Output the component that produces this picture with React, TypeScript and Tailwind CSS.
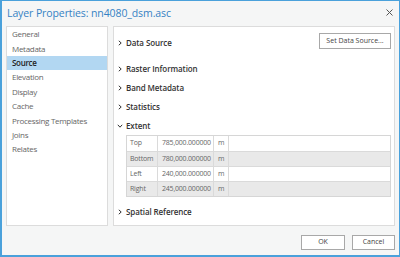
import React from 'react';

const pages = [
  'General',
  'Metadata',
  'Source',
  'Elevation',
  'Display',
  'Cache',
  'Processing Templates',
  'Joins',
  'Relates',
];

const extent = [
  { label: 'Top', value: '785,000.000000' },
  { label: 'Bottom', value: '780,000.000000' },
  { label: 'Left', value: '240,000.000000' },
  { label: 'Right', value: '245,000.000000' },
];

function Chevron({ open }: { open?: boolean }) {
  return (
    <svg width="6" height="6" viewBox="0 0 6 6" className="shrink-0">
      {open ? (
        <path d="M0.8 1.8 L3 4.2 L5.2 1.8" fill="none" stroke="#333" strokeWidth="1" />
      ) : (
        <path d="M1.8 0.8 L4.2 3 L1.8 5.2" fill="none" stroke="#333" strokeWidth="1" />
      )}
    </svg>
  );
}

function SectionHeader({ title, open, className = '' }: { title: string; open?: boolean; className?: string }) {
  return (
    <div className={`flex items-center gap-[3px] h-[19px] pl-[2px] ${className}`}>
      <Chevron open={open} />
      <span className="text-[8px] font-semibold text-[#333] tracking-[-0.1px]">{title}</span>
    </div>
  );
}

export default function App() {
  return (
    <div
      className="w-[400px] h-[257px] bg-[#f5f6f6] border-l-2 border-t border-b-2 border-r border-[#4aa1db] flex flex-col overflow-hidden"
      style={{ fontFamily: '"Open Sans", "Noto Sans", sans-serif' }}
    >
      {/* title bar */}
      <div className="h-[25px] flex items-center justify-between pl-[5px] pr-[6px]">
        <span className="text-[10.5px] text-[#3582c4] tracking-[-0.1px]">Layer Properties: nn4080_dsm.asc</span>
        <svg width="7" height="7" viewBox="0 0 7 7" className="mt-[-2px]">
          <path d="M0.5 0.5 L6.5 6.5 M6.5 0.5 L0.5 6.5" stroke="#555" strokeWidth="1" />
        </svg>
      </div>

      <div className="flex gap-[5px] pl-[4px] pr-[4px] h-[200px]">
        {/* page list */}
        <div className="w-[102px] bg-white border border-[#dcdcdc] flex flex-col">
          {pages.map((p) => (
            <div
              key={p}
              className={`h-[14.4px] flex items-center pl-[5px] text-[8px] tracking-[-0.3px] ${
                p === 'Source' ? 'bg-[#b2d7f2] font-semibold text-[#222]' : 'text-[#666]'
              }`}
            >
              {p}
            </div>
          ))}
        </div>

        {/* source pane */}
        <div className="flex-1 bg-white border border-[#dcdcdc] flex flex-col pt-[6px] pl-[1px] pr-[3px]">
          <div className="flex items-center justify-between h-[16px]">
            <SectionHeader title="Data Source" className="mt-[4px]" />
            <button className="h-[16px] w-[72px] bg-white border border-[#a8a8a8] text-[7px] text-[#444]">
              Set Data Source...
            </button>
          </div>
          <SectionHeader title="Raster Information" className="mt-[10px]" />
          <SectionHeader title="Band Metadata" />
          <SectionHeader title="Statistics" />
          <SectionHeader title="Extent" open />

          <div className="ml-[11px] border border-[#d6d6d6] flex flex-col">
            {extent.map((r, i) => (
              <div
                key={r.label}
                className={`h-[15px] flex text-[7px] tracking-[-0.2px] text-[#666] ${
                  i % 2 ? 'bg-[#e9e9e9]' : 'bg-white'
                } ${i > 0 ? 'border-t border-[#dadada]' : ''}`}
              >
                <div className="w-[31px] pl-[3px] flex items-center border-r border-[#dadada]">{r.label}</div>
                <div className="w-[56px] pl-[4px] flex items-center border-r border-[#dadada]">{r.value}</div>
                <div className="w-[15px] pl-[4px] flex items-center border-r border-[#dadada]">m</div>
                <div className="flex-1" />
              </div>
            ))}
          </div>

          <SectionHeader title="Spatial Reference" className="mt-[5px]" />
        </div>
      </div>

      {/* footer */}
      <div className="flex justify-end gap-[7px] pr-[4px] pt-[9px]">
        <button className="w-[44px] h-[15px] bg-white border border-[#a8a8a8] text-[7px] text-[#444]">OK</button>
        <button className="w-[43px] h-[15px] bg-white border border-[#a8a8a8] text-[7px] text-[#444]">Cancel</button>
      </div>
    </div>
  );
}
